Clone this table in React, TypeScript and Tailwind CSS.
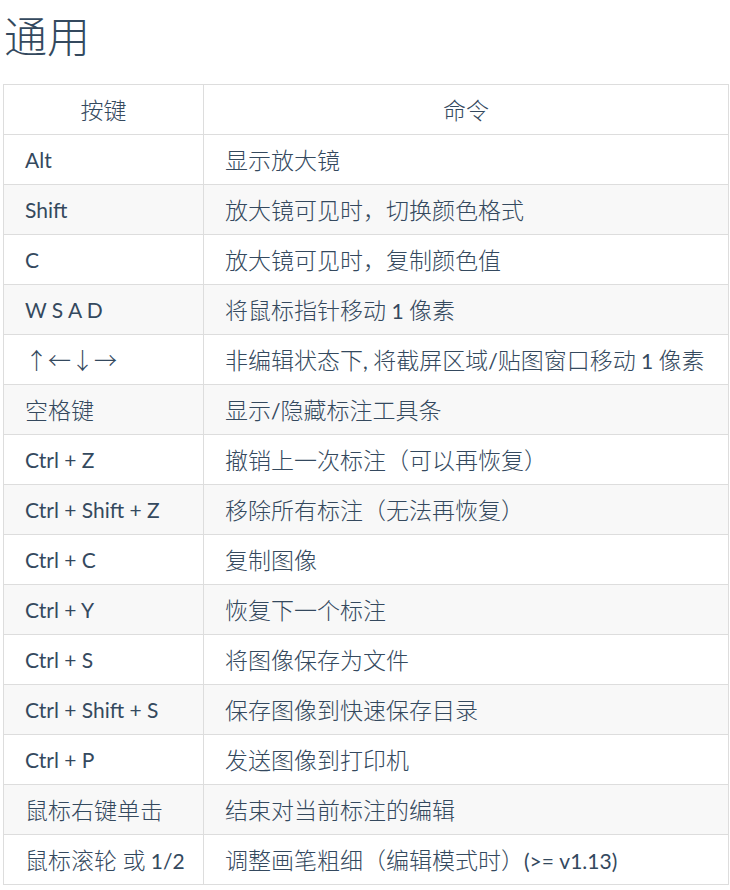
const rows: [string, string][] = [
  ["Alt", "显示放大镜"],
  ["Shift", "放大镜可见时，切换颜色格式"],
  ["C", "放大镜可见时，复制颜色值"],
  ["W S A D", "将鼠标指针移动 1 像素"],
  ["↑←↓→", "非编辑状态下, 将截屏区域/贴图窗口移动 1 像素"],
  ["空格键", "显示/隐藏标注工具条"],
  ["Ctrl + Z", "撤销上一次标注（可以再恢复）"],
  ["Ctrl + Shift + Z", "移除所有标注（无法再恢复）"],
  ["Ctrl + C", "复制图像"],
  ["Ctrl + Y", "恢复下一个标注"],
  ["Ctrl + S", "将图像保存为文件"],
  ["Ctrl + Shift + S", "保存图像到快速保存目录"],
  ["Ctrl + P", "发送图像到打印机"],
  ["鼠标右键单击", "结束对当前标注的编辑"],
  ["鼠标滚轮 或 1/2", "调整画笔粗细（编辑模式时）(>= v1.13)"],
];

// CJK glyphs render a bit larger than the latin text in the original
const Mixed = ({ text }: { text: string }) => {
  const parts = text.split(/([\u2190-\u2193\u3000-\u9fff\uff00-\uffef]+)/);
  return (
    <>
      {parts.map((p, i) =>
        i % 2 === 1 ? (
          <span key={i} className="text-[23px] font-light font-['Noto_Sans_CJK_SC',sans-serif]">
            {p}
          </span>
        ) : (
          <span key={i}>{p}</span>
        )
      )}
    </>
  );
};

export default function App() {
  return (
    <div className="min-h-screen bg-white px-[3px] text-[#34495e] font-['Lato','Noto_Sans_CJK_SC',sans-serif]">
      {/* Heading */}
      <h1 className="h-[84px] pt-[8px] pl-[1px] text-[43px] leading-[52px] font-light font-['Noto_Sans_CJK_SC',serif]">
        通用
      </h1>

      <table className="w-[726px] table-fixed border-collapse text-[21px] leading-[28px]">
        <thead>
          <tr>
            <th className="h-[50px] w-[200px] border border-[#dddddd] font-normal text-center">
              <Mixed text="按键" />
            </th>
            <th className="h-[50px] border border-[#dddddd] font-normal text-center">
              <Mixed text="命令" />
            </th>
          </tr>
        </thead>
        <tbody>
          {rows.map(([key, cmd], i) => (
            <tr key={key} className={i % 2 === 1 ? "bg-[#f8f8f8]" : "bg-white"}>
              <td className="h-[50px] border border-[#dddddd] pl-[21px] pr-[4px] whitespace-nowrap">
                <Mixed text={key} />
              </td>
              <td className="h-[50px] border border-[#dddddd] pl-[21px] pr-[4px] whitespace-nowrap">
                <Mixed text={cmd} />
              </td>
            </tr>
          ))}
        </tbody>
      </table>
    </div>
  );
}
